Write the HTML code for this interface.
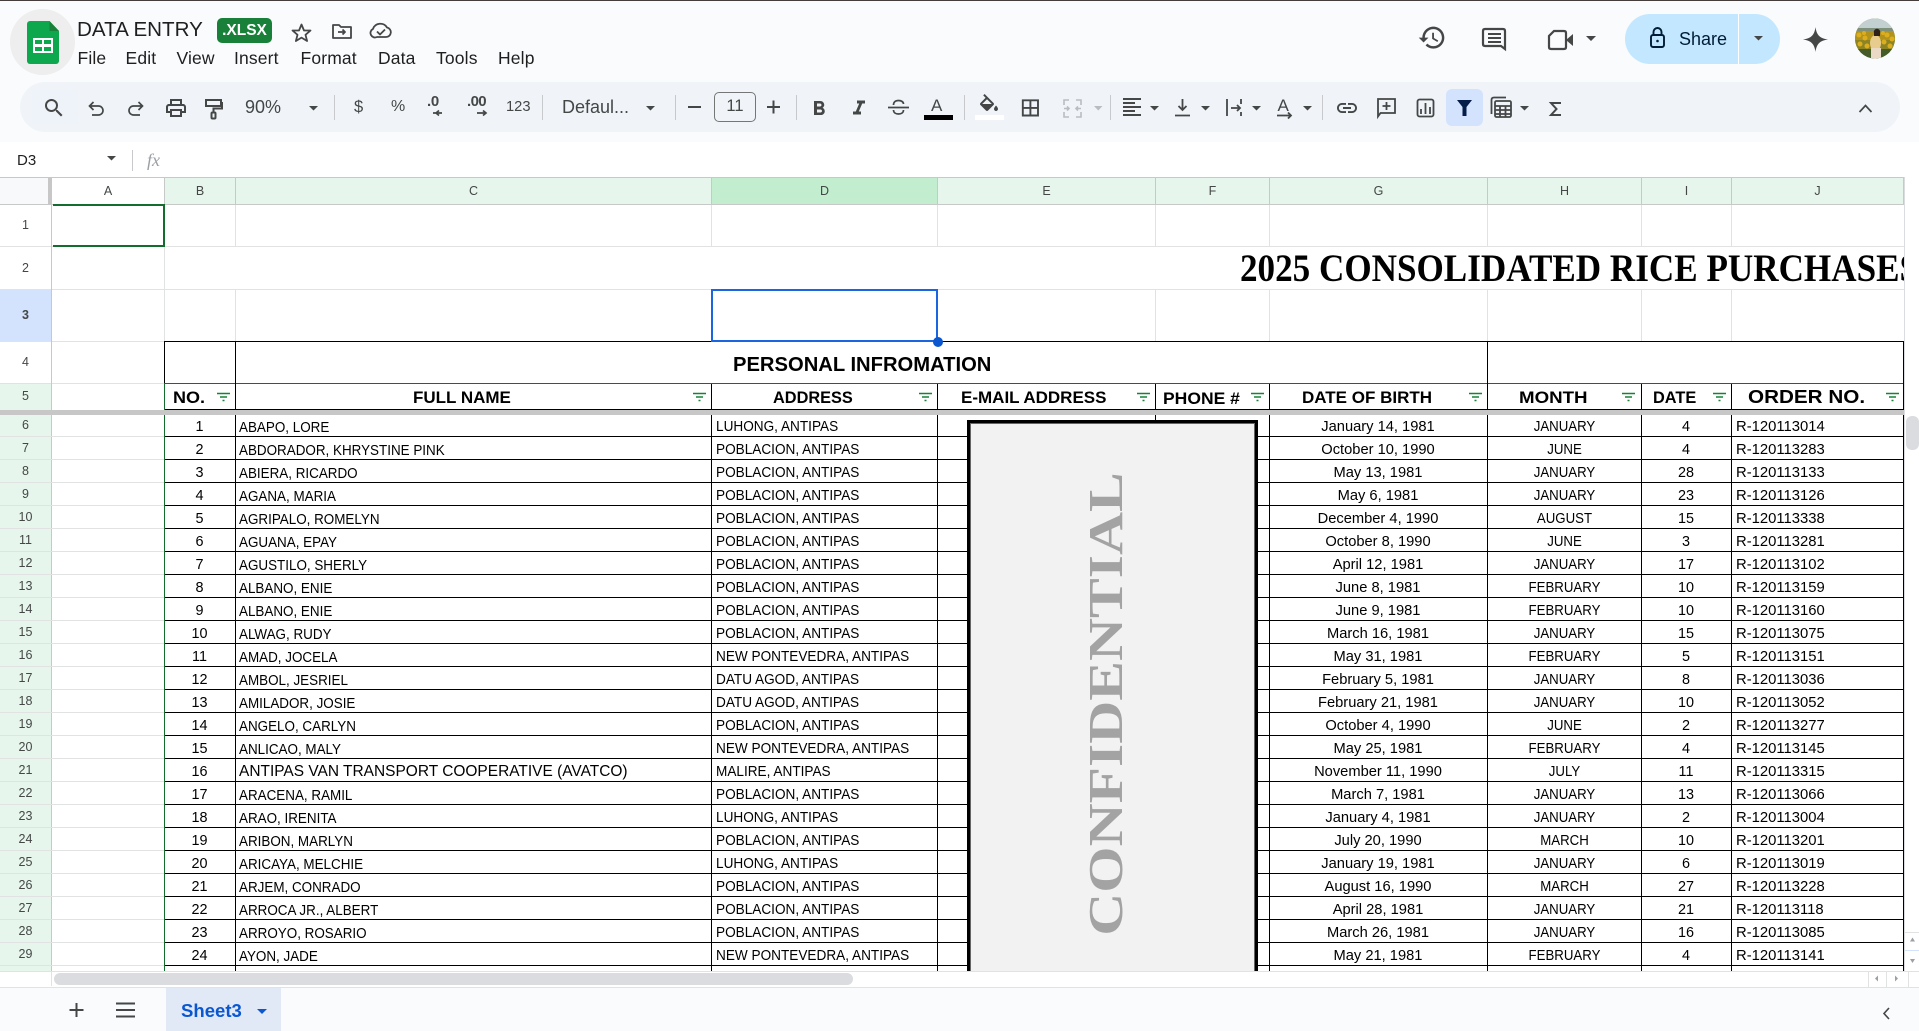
<!DOCTYPE html>
<html lang="en"><head><meta charset="utf-8"><title>DATA ENTRY</title>
<style>
html,body{margin:0;padding:0;width:1919px;height:1031px;overflow:hidden;background:#f9fbfd;font-family:"Liberation Sans",sans-serif;color:#1f1f1f}
.a{position:absolute;white-space:nowrap}
.v{position:absolute;width:1px}
.k{background:#000}.l{background:#e1e3e3}.h{background:#c7c9c9}
.rn{position:absolute;left:0;width:51px;text-align:center;font-size:12.5px;color:#444746;line-height:16px}
.ch{position:absolute;top:178px;height:26px;line-height:26px;text-align:center;font-size:12.5px;color:#444746;background:#e6f6ec;box-sizing:border-box;border-right:1px solid #c7c9c9}
.hd{position:absolute;font-weight:bold;font-size:17px;color:#000;white-space:nowrap;transform-origin:left center;line-height:20px}
.r{position:absolute;left:0;width:1904px;height:23px;color:#000}
.r span{position:absolute;top:3px;line-height:23px;white-space:nowrap;font-size:14.4px}
.r span:nth-child(1){left:164px;width:71px;text-align:center}
.r span:nth-child(2){left:239px;top:3.5px;transform:scaleX(.933);transform-origin:left center}
.r span:nth-child(3){left:716px;transform:scaleX(.945);transform-origin:left center}
.r span:nth-child(4){left:1269px;width:218px;text-align:center;transform:scaleX(1.02)}
.r span:nth-child(5){left:1488px;width:153px;text-align:center;transform:scaleX(.92)}
.r span:nth-child(6){left:1641px;width:90px;text-align:center}
.r span:nth-child(7){left:1735.5px;transform:scaleX(1.03);transform-origin:left center}
.m{top:46px;font-size:17.5px;line-height:24px;color:#1f1f1f;letter-spacing:.15px}
.t{color:#444746;line-height:24px}
</style></head><body>

<div style="position:absolute;left:0;top:0;width:1919px;height:1px;background:#453c3c"></div>
<div style="position:absolute;left:20px;top:82px;width:1880px;height:50px;border-radius:25px;background:#f0f4f9"></div>
<div style="position:absolute;left:32px;top:90px;width:46px;height:34px;background:#eef2f9"></div>
<div style="position:absolute;left:10px;top:9px;width:65px;height:66px;border-radius:50%;background:#eeeeee"></div>
<div style="position:absolute;left:0;top:142px;width:1919px;height:36px;background:#fff"></div>
<div style="position:absolute;left:217px;top:18px;width:55px;height:25px;border-radius:5px;background:#188038"></div>
<div style="position:absolute;left:1625px;top:14px;width:155px;height:50px;border-radius:25px;background:#c2e7ff"></div>
<div style="position:absolute;left:1738px;top:14px;width:1px;height:50px;background:#fff"></div>
<div style="position:absolute;left:1446px;top:89px;width:37px;height:37px;border-radius:6px;background:#d3e3fd"></div>
<div style="position:absolute;left:714px;top:92px;width:40px;height:28px;border:1px solid #747775;border-radius:5px"></div>

<!-- GRID -->
<div style="position:absolute;left:0;top:178px;width:1919px;height:793px;background:#fff"></div>
<div style="position:absolute;left:0;top:177px;width:1919px;height:794px;overflow:hidden">
<div style="position:absolute;left:0;top:-177px;width:1919px;height:1031px">
  <!-- row header backgrounds -->
  <div class="a" style="left:0;top:178px;width:48px;height:26px;background:#f8f9fa"></div>
  <div class="a" style="left:48px;top:178px;width:4px;height:26px;background:#c7c7c7"></div>
  <div class="a" style="left:0;top:290px;width:51px;height:51px;background:#d3e3fd"></div>
  <div class="a" style="left:0;top:384px;width:51px;height:587px;background:#e6f6ec"></div>

  <div class="ch" style="left:52px;width:113px;background:#fff">A</div>
  <div class="ch" style="left:165px;width:71px">B</div>
  <div class="ch" style="left:236px;width:476px">C</div>
  <div class="ch" style="left:712px;width:226px;background:#c2eecf">D</div>
  <div class="ch" style="left:938px;width:218px">E</div>
  <div class="ch" style="left:1156px;width:114px">F</div>
  <div class="ch" style="left:1270px;width:218px">G</div>
  <div class="ch" style="left:1488px;width:154px">H</div>
  <div class="ch" style="left:1642px;width:90px">I</div>
  <div class="ch" style="left:1732px;width:172px">J</div>
  <div class="a h" style="left:0;top:177px;width:1904px;height:1px"></div>
  <div class="a h" style="left:0;top:204px;width:1904px;height:1px"></div>
  <div class="a" style="left:1904px;top:177px;width:1px;height:794px;background:#dadce0"></div>

  <!-- light grid lines -->
  <div class="a l" style="left:0;top:246px;width:1904px;height:1px"></div>
  <div class="a l" style="left:0;top:289px;width:1904px;height:1px"></div>
  <div class="a l" style="left:0;top:341px;width:164px;height:1px"></div>
  <div class="a l" style="left:0;top:383px;width:164px;height:1px"></div>
  <div class="a h" style="left:51px;top:204px;width:1px;height:767px"></div>
  <div class="v l" style="left:164px;top:205px;height:136px"></div>
  <div class="v l" style="left:235px;top:205px;height:41px"></div><div class="v l" style="left:235px;top:290px;height:51px"></div>
  <div class="v l" style="left:711px;top:205px;height:41px"></div>
  <div class="v l" style="left:937px;top:205px;height:41px"></div><div class="v l" style="left:937px;top:290px;height:51px"></div>
  <div class="v l" style="left:1155px;top:205px;height:41px"></div><div class="v l" style="left:1155px;top:290px;height:51px"></div>
  <div class="v l" style="left:1269px;top:205px;height:41px"></div><div class="v l" style="left:1269px;top:290px;height:51px"></div>
  <div class="v l" style="left:1487px;top:205px;height:41px"></div><div class="v l" style="left:1487px;top:290px;height:51px"></div>
  <div class="v l" style="left:1641px;top:205px;height:41px"></div><div class="v l" style="left:1641px;top:290px;height:51px"></div>
  <div class="v l" style="left:1731px;top:205px;height:41px"></div><div class="v l" style="left:1731px;top:290px;height:51px"></div>

  <!-- row lines -->
  <div class="a" style="left:0;top:414px;width:164px;height:557px;background:linear-gradient(transparent 22px,#e1e3e3 22px) 0 0/100% 23px"></div>
  <div class="a" style="left:164px;top:414px;width:1740px;height:557px;background:linear-gradient(transparent 22px,#000 22px) 0 0/100% 23px"></div>

  <!-- black structure -->
  <div class="a k" style="left:164px;top:341px;width:1740px;height:1px"></div>
  <div class="a" style="left:164px;top:383px;width:1740px;height:1px;background:#146c2e"></div>
  <div class="a k" style="left:164px;top:409px;width:1740px;height:1px"></div>
  <div class="v k" style="left:164px;top:341px;height:42px"></div>
  <div class="v" style="left:164px;top:384px;height:587px;background:#146c2e"></div>
  <div class="v k" style="left:235px;top:341px;height:630px"></div>
  <div class="v k" style="left:711px;top:384px;height:587px"></div>
  <div class="v k" style="left:937px;top:384px;height:587px"></div>
  <div class="v k" style="left:1155px;top:384px;height:587px"></div>
  <div class="v k" style="left:1269px;top:384px;height:587px"></div>
  <div class="v k" style="left:1487px;top:341px;height:630px"></div>
  <div class="v k" style="left:1641px;top:384px;height:587px"></div>
  <div class="v k" style="left:1731px;top:384px;height:587px"></div>
  <div class="v k" style="left:1903px;top:341px;height:630px"></div>

  <!-- title -->
  <div class="a" style="left:0;top:247px;width:1904px;height:42px;overflow:hidden;z-index:2"><div class="a" style="left:1240px;top:-3px;font:bold 39px/50px 'Liberation Serif',serif;color:#000;transform:scaleX(.9);transform-origin:left center">2025 CONSOLIDATED RICE PURCHASES</div></div>
  <div class="a" style="left:733px;top:352px;font:bold 20.5px/26px 'Liberation Sans',sans-serif;color:#000;transform:scaleX(.985);transform-origin:left center">PERSONAL INFROMATION</div>

  <!-- headers -->
  <div class="hd" style="left:173px;top:388px;transform:scaleX(1.06)">NO.</div>
  <div class="hd" style="left:413px;top:388px">FULL NAME</div>
  <div class="hd" style="left:773px;top:388px;transform:scaleX(.96)">ADDRESS</div>
  <div class="hd" style="left:961px;top:388px">E-MAIL ADDRESS</div>
  <div class="hd" style="left:1163px;top:389px;transform:scaleX(1.03)">PHONE #</div>
  <div class="hd" style="left:1302px;top:388px">DATE OF BIRTH</div>
  <div class="hd" style="left:1519px;top:388px;transform:scaleX(1.1)">MONTH</div>
  <div class="hd" style="left:1653px;top:388px;transform:scaleX(.96)">DATE</div>
  <div class="hd" style="left:1748px;top:387px;font-size:18.3px;transform:scaleX(1.13)">ORDER NO.</div>

  <!-- rows -->
  <div class="r" style="top:413px"><span>1</span><span>ABAPO, LORE</span><span>LUHONG, ANTIPAS</span><span>January 14, 1981</span><span>JANUARY</span><span>4</span><span>R-120113014</span></div>
  <div class="r" style="top:436px"><span>2</span><span>ABDORADOR, KHRYSTINE PINK</span><span>POBLACION, ANTIPAS</span><span>October 10, 1990</span><span>JUNE</span><span>4</span><span>R-120113283</span></div>
  <div class="r" style="top:459px"><span>3</span><span>ABIERA, RICARDO</span><span>POBLACION, ANTIPAS</span><span>May 13, 1981</span><span>JANUARY</span><span>28</span><span>R-120113133</span></div>
  <div class="r" style="top:482px"><span>4</span><span>AGANA, MARIA</span><span>POBLACION, ANTIPAS</span><span>May 6, 1981</span><span>JANUARY</span><span>23</span><span>R-120113126</span></div>
  <div class="r" style="top:505px"><span>5</span><span>AGRIPALO, ROMELYN</span><span>POBLACION, ANTIPAS</span><span>December 4, 1990</span><span>AUGUST</span><span>15</span><span>R-120113338</span></div>
  <div class="r" style="top:528px"><span>6</span><span>AGUANA, EPAY</span><span>POBLACION, ANTIPAS</span><span>October 8, 1990</span><span>JUNE</span><span>3</span><span>R-120113281</span></div>
  <div class="r" style="top:551px"><span>7</span><span>AGUSTILO, SHERLY</span><span>POBLACION, ANTIPAS</span><span>April 12, 1981</span><span>JANUARY</span><span>17</span><span>R-120113102</span></div>
  <div class="r" style="top:574px"><span>8</span><span>ALBANO, ENIE</span><span>POBLACION, ANTIPAS</span><span>June 8, 1981</span><span>FEBRUARY</span><span>10</span><span>R-120113159</span></div>
  <div class="r" style="top:597px"><span>9</span><span>ALBANO, ENIE</span><span>POBLACION, ANTIPAS</span><span>June 9, 1981</span><span>FEBRUARY</span><span>10</span><span>R-120113160</span></div>
  <div class="r" style="top:620px"><span>10</span><span>ALWAG, RUDY</span><span>POBLACION, ANTIPAS</span><span>March 16, 1981</span><span>JANUARY</span><span>15</span><span>R-120113075</span></div>
  <div class="r" style="top:643px"><span>11</span><span>AMAD, JOCELA</span><span>NEW PONTEVEDRA, ANTIPAS</span><span>May 31, 1981</span><span>FEBRUARY</span><span>5</span><span>R-120113151</span></div>
  <div class="r" style="top:666px"><span>12</span><span>AMBOL, JESRIEL</span><span>DATU AGOD, ANTIPAS</span><span>February 5, 1981</span><span>JANUARY</span><span>8</span><span>R-120113036</span></div>
  <div class="r" style="top:689px"><span>13</span><span>AMILADOR, JOSIE</span><span>DATU AGOD, ANTIPAS</span><span>February 21, 1981</span><span>JANUARY</span><span>10</span><span>R-120113052</span></div>
  <div class="r" style="top:712px"><span>14</span><span>ANGELO, CARLYN</span><span>POBLACION, ANTIPAS</span><span>October 4, 1990</span><span>JUNE</span><span>2</span><span>R-120113277</span></div>
  <div class="r" style="top:735px"><span>15</span><span>ANLICAO, MALY</span><span>NEW PONTEVEDRA, ANTIPAS</span><span>May 25, 1981</span><span>FEBRUARY</span><span>4</span><span>R-120113145</span></div>
  <div class="r" style="top:758px"><span>16</span><span style="top:1.5px;font-size:16px;transform:scaleX(.967)">ANTIPAS VAN TRANSPORT COOPERATIVE (AVATCO)</span><span>MALIRE, ANTIPAS</span><span>November 11, 1990</span><span>JULY</span><span>11</span><span>R-120113315</span></div>
  <div class="r" style="top:781px"><span>17</span><span>ARACENA, RAMIL</span><span>POBLACION, ANTIPAS</span><span>March 7, 1981</span><span>JANUARY</span><span>13</span><span>R-120113066</span></div>
  <div class="r" style="top:804px"><span>18</span><span>ARAO, IRENITA</span><span>LUHONG, ANTIPAS</span><span>January 4, 1981</span><span>JANUARY</span><span>2</span><span>R-120113004</span></div>
  <div class="r" style="top:827px"><span>19</span><span>ARIBON, MARLYN</span><span>POBLACION, ANTIPAS</span><span>July 20, 1990</span><span>MARCH</span><span>10</span><span>R-120113201</span></div>
  <div class="r" style="top:850px"><span>20</span><span>ARICAYA, MELCHIE</span><span>LUHONG, ANTIPAS</span><span>January 19, 1981</span><span>JANUARY</span><span>6</span><span>R-120113019</span></div>
  <div class="r" style="top:873px"><span>21</span><span>ARJEM, CONRADO</span><span>POBLACION, ANTIPAS</span><span>August 16, 1990</span><span>MARCH</span><span>27</span><span>R-120113228</span></div>
  <div class="r" style="top:896px"><span>22</span><span>ARROCA JR., ALBERT</span><span>POBLACION, ANTIPAS</span><span>April 28, 1981</span><span>JANUARY</span><span>21</span><span>R-120113118</span></div>
  <div class="r" style="top:919px"><span>23</span><span>ARROYO, ROSARIO</span><span>POBLACION, ANTIPAS</span><span>March 26, 1981</span><span>JANUARY</span><span>16</span><span>R-120113085</span></div>
  <div class="r" style="top:942px"><span>24</span><span>AYON, JADE</span><span>NEW PONTEVEDRA, ANTIPAS</span><span>May 21, 1981</span><span>FEBRUARY</span><span>4</span><span>R-120113141</span></div>

  <!-- row numbers -->
  <div class="rn" style="top:217px">1</div><div class="rn" style="top:260px">2</div><div class="rn" style="top:307px;font-weight:bold">3</div><div class="rn" style="top:354px">4</div><div class="rn" style="top:388px">5</div>
  <div class="rn" style="top:417px">6</div><div class="rn" style="top:440px">7</div><div class="rn" style="top:463px">8</div><div class="rn" style="top:486px">9</div><div class="rn" style="top:509px">10</div><div class="rn" style="top:532px">11</div><div class="rn" style="top:555px">12</div><div class="rn" style="top:578px">13</div><div class="rn" style="top:601px">14</div><div class="rn" style="top:624px">15</div><div class="rn" style="top:647px">16</div><div class="rn" style="top:670px">17</div><div class="rn" style="top:693px">18</div><div class="rn" style="top:716px">19</div><div class="rn" style="top:739px">20</div><div class="rn" style="top:762px">21</div><div class="rn" style="top:785px">22</div><div class="rn" style="top:808px">23</div><div class="rn" style="top:831px">24</div><div class="rn" style="top:854px">25</div><div class="rn" style="top:877px">26</div><div class="rn" style="top:900px">27</div><div class="rn" style="top:923px">28</div><div class="rn" style="top:946px">29</div>

  <!-- freeze bar -->
  <div class="a" style="left:0;top:410px;width:1904px;height:5px;background:#c7c7c7"></div>

  <!-- selections -->
  <div class="a" style="left:53px;top:204px;width:112px;height:2px;background:#146c2e"></div>
  <div class="a" style="left:53px;top:245px;width:112px;height:2px;background:#146c2e"></div>
  <div class="a" style="left:163px;top:204px;width:2px;height:43px;background:#146c2e"></div>
  <div class="a" style="left:711px;top:289px;width:223px;height:49px;border:2px solid #1a66e0"></div>
  <div class="a" style="left:933px;top:337px;width:10px;height:10px;border-radius:50%;background:#0b57d0"></div>

  <!-- image -->
  <div class="v k" style="left:1155px;top:415px;height:5px"></div>
  <div class="a" style="left:967px;top:420px;width:285px;height:600px;background:#f2f2f2;border:3px solid #000;box-shadow:inset 0 0 0 1px #666"></div>
  <div class="a" style="left:1106px;top:704px;width:0;height:0"><div class="a" style="left:-191px;top:-28px;width:382px;text-align:center;font:bold 49px/56px 'Liberation Serif',serif;color:#a3a3a3;transform:rotate(-90deg) scaleX(1.216)">CONFIDENTIAL</div></div>

  <svg class="a" style="left:0;top:0" width="1919" height="1031" fill="none" stroke="#188038" stroke-width="1.4">
    <path d="M217 393.5h13M220 397h7M222.500 400.500h2M693 393.500h13M696 397h7M698.500 400.500h2M919 393.500h13M922 397h7M924.500 400.500h2M1137 393.500h13M1140 397h7M1142.500 400.500h2M1251 393.500h13M1254 397h7M1256.500 400.500h2M1469 393.500h13M1472 397h7M1474.500 400.500h2M1622 393.500h13M1625 397h7M1627.500 400.500h2M1713 393.500h13M1716 397h7M1718.500 400.500h2M1886 393.500h13M1889 397h7M1891.500 400.500h2"/>
  </svg>
</div></div>

<!-- horizontal scroller & bottom -->
<div class="a" style="left:0;top:971px;width:1919px;height:16px;background:#fff"></div>
<div class="a" style="left:0;top:971px;width:1919px;height:1px;background:#e1e3e3"></div>
<div class="a" style="left:51px;top:971px;width:1px;height:15px;background:#e1e3e3"></div>
<div class="a" style="left:54px;top:973px;width:799px;height:12px;border-radius:6px;background:#dadce0"></div>
<div class="a" style="left:0;top:987px;width:1919px;height:1px;background:#e1e3e3"></div>
<div class="a" style="left:0;top:988px;width:1919px;height:43px;background:#f9fbfd"></div>
<div class="a" style="left:166px;top:988px;width:115px;height:43px;background:#e1e9f7"></div>
<div class="a" style="left:181px;top:999px;font-size:18px;line-height:24px;color:#0b57d0;font-weight:bold;transform:scaleX(1.03);transform-origin:left center">Sheet3</div>
<div class="a" style="left:1906px;top:416px;width:13px;height:34px;border-radius:6px;background:#dadce0"></div>
<div class="a" style="left:1905px;top:932px;width:14px;height:1px;background:#e1e3e3"></div>
<div class="a" style="left:1905px;top:950px;width:14px;height:1px;background:#d3e3fd"></div>

<!-- top texts -->
<div class="a" style="left:77px;top:18px;font-size:20.600px;line-height:24px;color:#1f1f1f">DATA ENTRY</div>
<div class="a" style="left:217px;top:18px;width:55px;height:25px;text-align:center;color:#fff;font-weight:bold;font-size:15.500px;line-height:25px">.XLSX</div>
<div class="a m" style="left:77.500px">File</div><div class="a m" style="left:125.500px">Edit</div><div class="a m" style="left:176.500px">View</div><div class="a m" style="left:234px">Insert</div><div class="a m" style="left:300.500px">Format</div><div class="a m" style="left:378px">Data</div><div class="a m" style="left:436px">Tools</div><div class="a m" style="left:498px">Help</div>
<div class="a t" style="left:245px;top:95px;font-size:18px">90%</div>
<div class="a t" style="left:354px;top:95px;font-size:16.500px">$</div>
<div class="a t" style="left:391px;top:95px;font-size:16px">%</div>
<div class="a t" style="left:427px;top:90px;font-size:15px;font-weight:bold;letter-spacing:-.3px">.0</div>
<div class="a t" style="left:467px;top:90px;font-size:15px;font-weight:bold;letter-spacing:-.6px">.00</div>
<div class="a t" style="left:506px;top:95px;font-size:15px;transform:scaleX(.98);transform-origin:left center">123</div>
<div class="a t" style="left:562px;top:95px;font-size:18px">Defaul...</div>
<div class="a t" style="left:714px;top:94px;width:42px;text-align:center;font-size:16.500px">11</div>
<div class="a t" style="left:931px;top:94px;font-size:17px">A</div>
<div class="a t" style="left:1277.500px;top:94px;font-size:17px">A</div>
<div class="a" style="left:1679px;top:26px;font-size:18px;line-height:26px;color:#001d35">Share</div>
<div class="a" style="left:17px;top:151px;font-size:15px;line-height:20px;color:#1f1f1f">D3</div>
<div class="a" style="left:147px;top:149px;font:italic 18px/22px 'Liberation Serif',serif;color:#9aa0a6">fx</div>

<!-- ICONS -->
<svg class="a" style="left:0;top:0;pointer-events:none" width="1919" height="1031" fill="none">
  <defs><clipPath id="av"><circle cx="1875" cy="38.500" r="20"/></clipPath></defs>
  <!-- logo -->
  <path d="M30 21h19.500L59 31v30a3 3 0 0 1-3 3H30a3 3 0 0 1-3-3V24a3 3 0 0 1 3-3z" fill="#0da84e"/>
  <path d="M49.500 21L59 31h-9.500z" fill="#188038"/>
  <rect x="33" y="38" width="20" height="15" fill="#fff"/>
  <path d="M35 40h7v4h-7zM44 40h7v4h-7zM35 47h7v4h-7zM44 47h7v4h-7z" fill="#0da84e"/>
  <!-- title icons -->
  <g stroke="#444746" stroke-width="1.800" stroke-linejoin="round">
    <path d="M301.500 24.500l2.500 6h6.500l-5 4.300 1.600 6.200-5.600-3.400-5.600 3.400 1.600-6.200-5-4.300h6.500z"/>
    <path d="M333 25h6l2 2h10v11h-18z"/><path d="M338 32h7m-2.500-2.500l2.500 2.500-2.500 2.500"/>
    <path d="M377 37h9a4.800 4.800 0 0 0 1-9.500 7.800 7.800 0 0 0-14 1.400A4.300 4.300 0 0 0 377 37z"/><path d="M377 31.500l3 3 5-5"/>
  </g>
  <!-- toolbar left -->
  <g fill="#444746">
    <path transform="translate(42,96)" d="M15.500 14h-.79l-.28-.27A6.471 6.471 0 0 0 16 9.500 6.500 6.500 0 1 0 9.500 16c1.610 0 3.090-.59 4.230-1.570l.27.28v.79l5 4.990L20.490 19l-4.990-5zm-6 0C7.010 14 5 11.990 5 9.500S7.010 5 9.500 5 14 7.010 14 9.500 11.990 14 9.500 14z"/>
    <path transform="translate(164,96)" d="M19 8h-1V3H6v5H5c-1.660 0-3 1.340-3 3v6h4v4h12v-4h4v-6c0-1.660-1.340-3-3-3zM8 5h8v3H8V5zm8 14H8v-4h8v4zm2-4v-2H6v2H4v-4c0-.55.45-1 1-1h14c.55 0 1 .45 1 1v4h-2z"/>
    <path d="M309 106h9l-4.500 4.500zM646 106h9l-4.500 4.500zM1150 106h9l-4.500 4.500zM1201 106h9l-4.500 4.500zM1252 106h9l-4.500 4.500zM1303 106h9l-4.500 4.500zM1520 106h9l-4.500 4.500zM1586 36h10l-5 5zM1754 36h9l-4.500 4.500z"/>
    <path transform="translate(807,97)" d="M15.600 10.790c.97-.67 1.650-1.770 1.650-2.790 0-2.260-1.750-4-4-4H7v14h7.040c2.090 0 3.710-1.700 3.710-3.790 0-1.520-.86-2.820-2.150-3.420zM10 6.500h3c.83 0 1.500.67 1.500 1.500s-.67 1.500-1.500 1.500h-3v-3zm3.500 9H10v-3h3.500c.83 0 1.500.67 1.500 1.500s-.67 1.500-1.500 1.500z"/>
    <path transform="translate(847,96.500)" d="M10 4v3h2.210l-3.420 8H6v3h8v-3h-2.210l3.420-8H18V4z"/>
    <path transform="translate(977,94)" d="M16.560 8.940L7.620 0 6.210 1.410l2.380 2.380-5.150 5.150c-.59.590-.59 1.540 0 2.120l5.500 5.500c.29.29.68.44 1.060.44s.77-.15 1.060-.44l5.500-5.500c.59-.58.59-1.530 0-2.120zM5.210 10L10 5.210 14.790 10H5.210zM19 11.500s-2 2.170-2 3.500c0 1.100.9 2 2 2s2-.9 2-2c0-1.330-2-3.500-2-3.500z"/>
    <path d="M982 104h10l-5 5z"/>
    <path transform="translate(1019,96.500) scale(.95)" d="M3 3v18h18V3H3zm8 16H5v-6h6v6zm0-8H5V5h6v6zm8 8h-6v-6h6v6zm0-8h-6V5h6v6z"/>
    <path transform="translate(1335,96)" d="M3.900 12c0-1.710 1.390-3.100 3.100-3.100h4V7H7c-2.760 0-5 2.240-5 5s2.240 5 5 5h4v-1.900H7c-1.710 0-3.100-1.390-3.100-3.100zM8 13h8v-2H8v2zm9-6h-4v1.900h4c1.710 0 3.100 1.390 3.100 3.100s-1.390 3.100-3.100 3.100h-4V17h4c2.760 0 5-2.240 5-5s-2.240-5-5-5z"/>
    <path transform="translate(1417.500,23) scale(1.220)" d="M13 3c-4.970 0-9 4.030-9 9H1l3.890 3.890.07.14L9 12H6c0-3.870 3.130-7 7-7s7 3.130 7 7-3.130 7-7 7c-1.930 0-3.680-.79-4.940-2.060l-1.420 1.420C8.270 19.990 10.510 21 13 21c4.970 0 9-4.030 9-9s-4.030-9-9-9zm-1 5v5l4.280 2.540.72-1.210-3.500-2.080V8H12z"/>
    <path d="M1566 40l7-6v12z"/>
    <path d="M1815.500 27C1816.500 35 1820 38.500 1828 39.500C1820 40.500 1816.500 44 1815.500 52C1814.500 44 1811 40.500 1803 39.500C1811 38.500 1814.500 35 1815.500 27z"/>
  </g>
  <g stroke="#444746" stroke-width="1.700" fill="none">
    <path d="M93.500 102l-4 4 4 4M90 106h8.500a4.500 4.500 0 0 1 0 9H92"/>
    <path d="M138.500 102l4 4-4 4M142 106h-8.500a4.500 4.500 0 0 0 0 9H140"/>
    <path stroke-width="2" d="M206 100h15v6h-15zM221 103h1v5.500h-8.500V112"/><rect x="211.500" y="112.500" width="4" height="6" rx="1" stroke-width="2"/>
    <path d="M436 113h9m-3-2.500l-3 2.500 3 2.500" transform="translate(-3,0)"/>
    <path d="M476 113h9m-3-2.500l3 2.500-3 2.500" transform="translate(1,0)"/>
    <path stroke-width="2" d="M688 107h13M767 107h13M773.500 100.500v13"/>
    <path d="M888 107.500h21M893.500 105c0-3 2-4.500 5-4.500s5 1.500 5 3.500M893.500 110c0 2.500 2 4 5 4s5-1.500 5-4"/>
    <path stroke-width="2" d="M1123 99h18M1123 103h12M1123 107h18M1123 111h12M1123 115h18"/>
    <path stroke-width="1.800" d="M1182.500 99v11m-4-4l4 4 4-4M1175 115.500h15"/>
    <path stroke-width="1.800" d="M1227 99v17M1241 99v5M1241 112v4M1231 108h9m-3-3l3 3-3 3"/>
    <path stroke-width="1.800" d="M1277 115.500h14m-3-3l3 3-3 3"/>
    <path stroke-width="1.800" d="M1378 99h17v14h-14.500l-2.500 3.500zM1386.500 102v8M1382.500 106h8"/>
    <rect x="1417.500" y="99.500" width="16" height="17" rx="2" stroke-width="1.800"/>
    <path stroke-width="1.800" d="M1421 109v5M1425.500 103v11M1430 107v7"/>
    <path stroke-width="1.800" d="M1491.500 114v-14q0-2.500 2.500-2.500h12"/><rect x="1495" y="101" width="16" height="16" rx="1.500" stroke-width="1.800"/>
    <path stroke-width="1.800" d="M1495 106h16M1495 110h16M1495 114h16M1500 106v11M1505.500 106v11"/>
    <path stroke-width="2" d="M1561 103h-10l5.500 6-5.500 6h10"/>
    <path d="M1859.500 112l6-6.500 6 6.500"/>
    <path stroke-width="2.200" d="M1485 29h18q2 0 2 2v18l-4-3h-16q-2 0-2-2V31q0-2 2-2z"/>
    <path stroke-width="2" d="M1488 34h13M1488 38h13M1488 42h13"/>
    <path stroke-width="2.200" d="M1554 31h10q2 0 2 2v14q0 2-2 2h-13q-2 0-2-2V36z"/>
  </g>
  <!-- merge (disabled) -->
  <g stroke="#b9bcc0" stroke-width="1.600" fill="none">
    <path d="M1069 100h-5v5M1064 112v5h5M1076 100h5v5M1081 112v5h-5M1064 108.500h5m-2-2l2 2-2 2M1081 108.500h-5m2-2l-2 2 2 2"/>
  </g>
  <path d="M1094 106h8.500l-4.250 4.500z" fill="#b9bcc0"/>
  <!-- text color bars -->
  <rect x="924" y="115" width="29" height="5" fill="#000"/>
  <rect x="975" y="115" width="29" height="5" fill="#fff"/>
  <!-- separators -->
  <path d="M334.500 95v25M542.500 95v25M675.500 95v25M796.500 95v25M964.500 95v25M1110.500 95v25M1322.500 95v25M132.500 150v21" stroke="#c7c9cc"/>
  <!-- filter -->
  <path d="M1457 100h15l-5.500 7v9h-4v-9z" fill="#041e49"/>
  <!-- lock -->
  <g stroke="#001d35" stroke-width="1.900" fill="none"><rect x="1651" y="35" width="13" height="12" rx="2"/><path d="M1653.500 35v-3a4 4 0 0 1 8 0v3"/></g>
  <circle cx="1657.500" cy="41" r="1.300" fill="#001d35"/>
  <!-- avatar -->
  <g clip-path="url(#av)">
    <rect x="1855" y="18" width="40" height="42" fill="#6d7a2a"/>
    <rect x="1855" y="18" width="40" height="11" fill="#c3d0d2"/>
    <rect x="1855" y="28" width="40" height="3" fill="#7e8f7a"/>
    <rect x="1855" y="31" width="40" height="9" fill="#b0921c"/>
    <rect x="1855" y="40" width="40" height="9" fill="#8c8422"/>
    <rect x="1855" y="49" width="40" height="11" fill="#465c28"/>
    <g fill="#dcae1f"><circle cx="1859" cy="35" r="2.500"/><circle cx="1865" cy="38" r="2.500"/><circle cx="1887" cy="35" r="2.500"/><circle cx="1892" cy="39" r="2.500"/><circle cx="1860" cy="44" r="2.500"/><circle cx="1867" cy="46" r="2.500"/><circle cx="1884" cy="42" r="2.500"/><circle cx="1890" cy="46" r="2.500"/><circle cx="1864" cy="33" r="2"/><circle cx="1883" cy="33" r="2"/></g>
    <ellipse cx="1875.500" cy="43" rx="5.500" ry="8" fill="#e8cc8e"/>
    <rect x="1871" y="48" width="10" height="11" fill="#ead9c4"/>
    <circle cx="1877" cy="32" r="3.200" fill="#2e211b"/><rect x="1874" y="31" width="6" height="5" fill="#2e211b"/>
  </g>
  <!-- formula -->
  <path d="M107 156h9l-4.500 4.500z" fill="#444746"/>
  <!-- bottom -->
  <path d="M76.500 1003v14M69.500 1010h14" stroke="#444746" stroke-width="2"/>
  <path d="M116 1003.500h19M116 1010h19M116 1016.500h19" stroke="#444746" stroke-width="2"/>
  <path d="M257 1009h10l-5 5z" fill="#0b57d0"/>
  <path d="M1889 1008l-5 5.500 5 5.500" stroke="#444746" stroke-width="1.600"/>
  <!-- scroll arrows -->
  <path d="M1910 941.500l2.500-4 2.500 4zM1910 959l2.500 4 2.500-4z" fill="#9aa0a6"/>
  <path d="M1878 975.500v6l-3-3zM1895 975.500v6l3-3z" fill="#9aa0a6"/>
  <path d="M1868.500 971v16M1886.500 971v16M1908.500 971v16" stroke="#e1e3e3"/>
</svg>
</body></html>
